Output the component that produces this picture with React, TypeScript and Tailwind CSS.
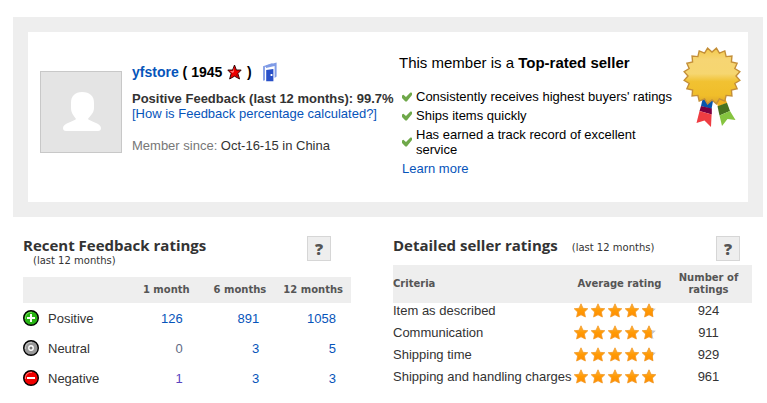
import React from "react";

const starPoints = "7,0.3 9,4.8 13.8,5.2 10.4,8.5 11.4,13.5 7,11.3 2.6,13.5 3.6,8.5 0.2,5.2 5,4.8";

function Stars({ value, id }: { value: number; id: string }) {
  const width = 68 + (value - 4) * 14;
  return (
    <svg width="82" height="15" viewBox="0 0 82 15" className="block" role="img" aria-label={`${value} out of 5`}>
      <defs>
        <linearGradient id={`fill-${id}`} x1="0" y1="0" x2="0" y2="1">
          <stop offset="0" stopColor="#ffb43c" />
          <stop offset="0.5" stopColor="#ff9a05" />
          <stop offset="1" stopColor="#ff8c00" />
        </linearGradient>
        <clipPath id={`clip-${id}`}>
          <rect x="0" y="0" width={width} height="15" />
        </clipPath>
      </defs>
      <polygon points={starPoints} transform="translate(68 0.5)" fill="#c4c6cc" />
      <g clipPath={`url(#clip-${id})`}>
        {[0, 17, 34, 51, 68].map((x) => (
          <polygon
            key={x}
            points={starPoints}
            transform={`translate(${x} 0.5)`}
            fill={`url(#fill-${id})`}
            stroke="#f39a2a"
            strokeWidth="0.8"
            strokeLinejoin="round"
          />
        ))}
      </g>
    </svg>
  );
}

function Check() {
  return (
    <svg width="10" height="10" viewBox="0 0 10 10" className="shrink-0" aria-hidden="true">
      <path d="M0 3.6 1.4 2.8 4 5 8.4.4 10 .8V3L4.8 9.4H3.4L0 6Z" fill="#6fa84a" />
    </svg>
  );
}

function RedStar() {
  return (
    <svg width="15" height="16" viewBox="0 0 15 16" aria-hidden="true">
      <path
        d="M7.5 1 9.4 6H14.2L10.9 9.6 12.6 15 7.5 12.2 2.6 15 4.1 9.6.8 6H5.6Z"
        fill="#ee0000"
        stroke="#200"
        strokeWidth="0.9"
      />
      <path d="M7 3.6 6.2 7.1H3L5.4 9 7 8Z" fill="#ff7070" />
      <path d="M8.5 11.3 11.4 13.2 10.1 9.2 12.4 6.9Z" fill="#b80000" />
    </svg>
  );
}

function Door() {
  return (
    <svg width="14" height="20" viewBox="0 0 14 20" aria-hidden="true">
      <path d="M0 4.2 9.5 1V2.8L2 5.2V18.2L0 18.8Z" fill="#8aa3e8" />
      <path d="M3 3.6 13.6.6V14.6L11.6 16V4L3 6Z" fill="#7f9be6" />
      <path d="M3.2 8 10.4 7V19.2H3.2Z" fill="#2850c8" />
      <rect x="7.6" y="12" width="1.8" height="2" fill="#fff" />
    </svg>
  );
}

const sealPoints = Array.from({ length: 40 }, (_, i) => {
  const r = i % 2 === 0 ? 28.2 : 24;
  const a = ((i + 1) * Math.PI) / 20;
  return `${(29 + r * Math.sin(a)).toFixed(2)},${(29 - r * Math.cos(a)).toFixed(2)}`;
}).join(" ");

function Seal() {
  return (
    <svg width="58" height="81" viewBox="0 0 58 81" role="img" aria-label="Top-rated seller">
      <defs>
        <linearGradient id="gold" x1="0" y1="0" x2="0" y2="1">
          <stop offset="0" stopColor="#f3c94a" />
          <stop offset="0.2" stopColor="#f6d573" />
          <stop offset="0.46" stopColor="#f6d670" />
          <stop offset="0.6" stopColor="#f1c232" />
          <stop offset="0.85" stopColor="#f0bd2a" />
          <stop offset="1" stopColor="#dba52a" />
        </linearGradient>
      </defs>
      <path d="M20 50 30 54 28.5 62 18 59Z" fill="#0654ac" />
      <path d="M18 59 28.8 61.5V67.5L16.5 64Z" fill="#7a0040" />
      <path d="M16.5 64 28.6 67.5 28 80 21.5 73.5 13.5 76Z" fill="#ee3d42" />
      <path d="M33 54 42 50.5 44 56 35 59.5Z" fill="#f2b01e" />
      <path d="M34.5 59.2 44 55.8 47 64 36.5 68.5Z" fill="#48731f" />
      <path d="M36.5 68.5 47 64 52.5 73 44.5 72 39 79Z" fill="#86c440" />
      <polygon points={sealPoints} fill="url(#gold)" stroke="#c48f38" strokeWidth="1.4" />
    </svg>
  );
}

function RatingIcon({ kind }: { kind: string }) {
  const color = kind === "Positive" ? "#28b414" : kind === "Neutral" ? "#999" : "#f00000";
  const light = kind === "Positive" ? "#7ade60" : kind === "Neutral" ? "#c8c8c8" : "#ff8080";
  return (
    <svg width="16" height="16" viewBox="0 0 16 16" className="block" aria-hidden="true">
      <circle cx="8" cy="8" r="7.3" fill={color} stroke="#000" strokeWidth="1.4" />
      <path d="M2.4 9A5.8 5.8 0 0 1 9 2.3" fill="none" stroke={light} strokeWidth="1" />
      {kind === "Positive" && <path d="M8 4V12M4 8H12" stroke="#fff" strokeWidth="2" />}
      {kind === "Neutral" && <circle cx="8" cy="8" r="2.2" fill="#777" stroke="#fff" strokeWidth="1.4" />}
      {kind === "Negative" && <path d="M4 8H12" stroke="#fff" strokeWidth="2" />}
    </svg>
  );
}

function HelpButton() {
  return (
    <button
      type="button"
      aria-label="Help"
      className="flex h-[25px] w-6 items-center justify-center border border-[#d6d6d6] bg-[#eee] font-['Open_Sans',sans-serif] text-base font-extrabold text-[#555]"
    >
      ?
    </button>
  );
}

const feedback = [
  { kind: "Positive", values: ["126", "891", "1058"] },
  { kind: "Neutral", values: ["0", "3", "5"] },
  { kind: "Negative", values: ["1", "3", "3"] },
];

const numberColor: Record<string, string> = { "0": "text-[#5f6b85]", "1": "text-[#5a45c0]" };

const criteria = [
  { name: "Item as described", stars: 4.8, count: 924 },
  { name: "Communication", stars: 4.7, count: 911 },
  { name: "Shipping time", stars: 4.8, count: 929 },
  { name: "Shipping and handling charges", stars: 5, count: 961 },
];

const headingClass = "font-['Open_Sans',sans-serif] text-[15px] leading-[18px] font-bold text-[#333]";
const noteClass = "font-['DejaVu_Sans',sans-serif] text-[10px] leading-3 text-[#333]";
const tableHeadClass = "bg-[#eee] font-['DejaVu_Sans',sans-serif] text-[10px] leading-3 text-[#555]";

export default function App() {
  return (
    <main className="bg-white pt-[17px] font-['Liberation_Sans',Arial,sans-serif] text-[13px] leading-[15px] text-[#333]">
      <section className="mr-1 ml-[13px] border-[15px] border-[#eee]">
        <div className="flex items-start pr-[7px] pb-[26px] pl-3">
          <div className="mt-[39px] mr-[10px] h-[82px] w-[82px] shrink-0 border border-[#c8c8c8] bg-[#e4e4e4]">
            <svg viewBox="0 0 80 80" role="img" aria-label="Profile picture">
              <path
                d="M41 20C49 20 53 24 53 31V36C53 41 49 44 47 47C48 49 60 51 60 56C60 58 59 59 57 59H25C23 59 22 58 22 56C22 51 34 49 35 47C33 44 30 41 30 36V31C30 24 34 20 41 20Z"
                fill="#fff"
              />
            </svg>
          </div>

          <div className="w-[267px] shrink-0 pt-[30px]">
            <h1 className="flex h-5 items-center text-sm leading-5 font-bold whitespace-pre text-black">
              <a href="#store" className="text-[#0654ba]">yfstore</a>
              <span> ( 1945 </span>
              <span className="mx-px"><RedStar /></span>
              <span> )</span>
              <a href="#visit" aria-label="Visit store" className="ml-[11px]"><Door /></a>
            </h1>
            <p className="mt-[9px] font-bold whitespace-nowrap">Positive Feedback (last 12 months): 99.7%</p>
            <a href="#percentage" className="block text-[#0654ba]">[How is Feedback percentage calculated?]</a>
            <p className="mt-[17px]">
              <span className="text-[#777]">Member since:</span> Oct-16-15 in China
            </p>
          </div>

          <div className="w-[277px] pt-[23px] text-black">
            <h2 className="text-[15px] leading-4">
              This member is a <b>Top-rated seller</b>
            </h2>
            <ul className="mt-[18px] flex flex-col gap-1 pl-[3px]">
              {["Consistently receives highest buyers' ratings", "Ships items quickly", "Has earned a track record of excellent service"].map((text) => (
                <li key={text} className="flex items-center gap-1">
                  <Check />
                  <span>{text}</span>
                </li>
              ))}
            </ul>
            <a href="#learn" className="mt-1 ml-[3px] block text-[#0654ba]">Learn more</a>
          </div>

          <div className="mt-[15px] ml-auto shrink-0">
            <Seal />
          </div>
        </div>
      </section>

      <div className="grid grid-cols-[328fr_359fr] items-start gap-[42px] pt-[19px] pr-[15px] pl-[23px]">
        <section>
          <div className="flex justify-between pr-5">
            <div>
              <h2 className={headingClass}>Recent Feedback ratings</h2>
              <p className={noteClass + " pt-px pl-[10px]"}>(last 12 months)</p>
            </div>
            <HelpButton />
          </div>
          <table className="mt-[10px] w-full table-fixed">
            <thead className={tableHeadClass}>
              <tr className="h-[26px]">
                <td className="w-[25px]" />
                <td className="w-[73px]" />
                <th scope="col" className="pr-2 text-right whitespace-nowrap">1 month</th>
                <th scope="col" className="pr-2 text-right whitespace-nowrap">6 months</th>
                <th scope="col" className="pr-2 text-right whitespace-nowrap">12 months</th>
              </tr>
            </thead>
            <tbody>
              {feedback.map((row) => (
                <tr key={row.kind} className="h-[30px]">
                  <td><RatingIcon kind={row.kind} /></td>
                  <th scope="row" className="text-left font-normal">{row.kind}</th>
                  {row.values.map((value, i) => (
                    <td key={i} className="pr-[15px] text-right">
                      <a href="#feedback" className={numberColor[value] ?? "text-[#0654ba]"}>{value}</a>
                    </td>
                  ))}
                </tr>
              ))}
            </tbody>
          </table>
        </section>

        <section>
          <div className="flex items-start pr-3">
            <h2 className={headingClass}>Detailed seller ratings</h2>
            <p className={noteClass + " mt-[6px] ml-[14px]"}>(last 12 months)</p>
            <div className="ml-auto"><HelpButton /></div>
          </div>
          <table className="mt-1 w-full table-fixed">
            <thead className={tableHeadClass}>
              <tr className="h-[38px]">
                <th scope="col" className="text-left">Criteria</th>
                <th scope="col" className="w-[91px] whitespace-nowrap">Average rating</th>
                <th scope="col" className="w-[87px]">Number of ratings</th>
              </tr>
            </thead>
            <tbody>
              {criteria.map((row, i) => (
                <tr key={row.name} className="h-[22px] align-top">
                  <th scope="row" className="text-left font-normal whitespace-nowrap">{row.name}</th>
                  <td><Stars value={row.stars} id={`row${i}`} /></td>
                  <td className="text-center">{row.count}</td>
                </tr>
              ))}
            </tbody>
          </table>
        </section>
      </div>
    </main>
  );
}
